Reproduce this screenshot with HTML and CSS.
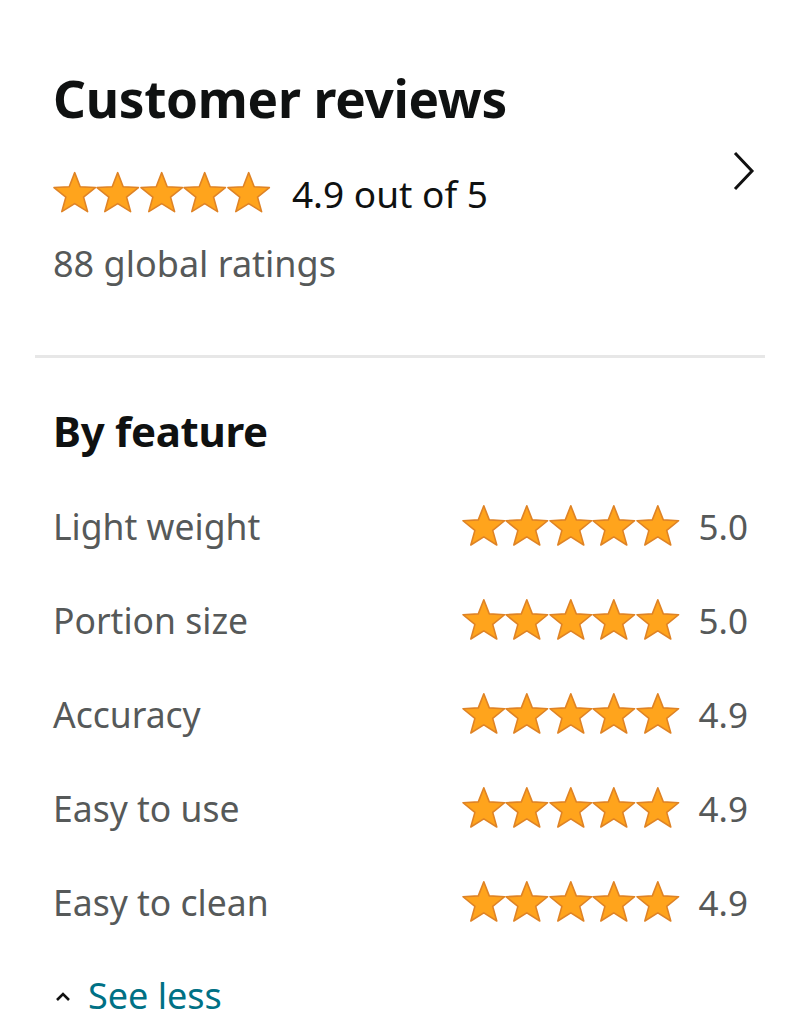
FILE: index.html
```html
<!DOCTYPE html>
<html lang="en">
<head>
<meta charset="utf-8">
<link rel="stylesheet" href="styles.css">
</head>
<body>
<svg width="0" height="0" class="defs" aria-hidden="true">
  <defs>
    <symbol id="star" viewBox="0 0 44 44" overflow="visible">
      <polygon points="22,1.6 27.55,15.85 43,16.7 30.99,26.42 35.1,41.2 22,32.95 8.9,41.2 13.01,26.42 1,16.7 16.45,15.85" fill="#FFA41C" stroke="#DF8325" stroke-width="1.6" stroke-linejoin="round"/>
    </symbol>
  </defs>
</svg>
<main class="page">
  <section class="summary">
    <h1 class="title">Customer reviews</h1>
    <div class="overall">
      <div class="overall-left">
        <span class="stars stars-lg">
          <svg><use href="#star"/></svg><svg><use href="#star"/></svg><svg><use href="#star"/></svg><svg><use href="#star"/></svg><svg><use href="#star"/></svg>
        </span>
        <span class="overall-text">4.9 out of 5</span>
      </div>
      <svg class="chevron" viewBox="0 0 22 40"><polyline points="2,2 19,20 2,38" fill="none" stroke="#111" stroke-width="3"/></svg>
    </div>
    <div class="global">88 global ratings</div>
  </section>
  <hr class="divider">
  <section class="features">
    <h2 class="subtitle">By feature</h2>
    <ul class="feature-list">
      <li class="feature"><span class="feature-name">Light weight</span><span class="feature-score"><span class="stars"><svg><use href="#star"/></svg><svg><use href="#star"/></svg><svg><use href="#star"/></svg><svg><use href="#star"/></svg><svg><use href="#star"/></svg></span><span class="num">5.0</span></span></li>
      <li class="feature"><span class="feature-name">Portion size</span><span class="feature-score"><span class="stars"><svg><use href="#star"/></svg><svg><use href="#star"/></svg><svg><use href="#star"/></svg><svg><use href="#star"/></svg><svg><use href="#star"/></svg></span><span class="num">5.0</span></span></li>
      <li class="feature"><span class="feature-name">Accuracy</span><span class="feature-score"><span class="stars"><svg><use href="#star"/></svg><svg><use href="#star"/></svg><svg><use href="#star"/></svg><svg><use href="#star"/></svg><svg><use href="#star"/></svg></span><span class="num">4.9</span></span></li>
      <li class="feature"><span class="feature-name">Easy to use</span><span class="feature-score"><span class="stars"><svg><use href="#star"/></svg><svg><use href="#star"/></svg><svg><use href="#star"/></svg><svg><use href="#star"/></svg><svg><use href="#star"/></svg></span><span class="num">4.9</span></span></li>
      <li class="feature"><span class="feature-name">Easy to clean</span><span class="feature-score"><span class="stars"><svg><use href="#star"/></svg><svg><use href="#star"/></svg><svg><use href="#star"/></svg><svg><use href="#star"/></svg><svg><use href="#star"/></svg></span><span class="num">4.9</span></span></li>
    </ul>
    <a class="see-less" href="#"><svg class="caret" viewBox="0 0 16 12"><polyline points="2,10 8,4 14,10" fill="none" stroke="#111" stroke-width="2.6"/></svg><span>See less</span></a>
  </section>
</main>
</body>
</html>
```

FILE: styles.css
```css
html, body {
  margin: 0;
  padding: 0;
  background: #fff;
}
body {
  font-family: "Noto Sans", "Open Sans", "Liberation Sans", sans-serif;
  color: #0f1111;
}
.defs {
  position: absolute;
  width: 0;
  height: 0;
}
.page {
  padding: 0 35px 0 35px;
}
.summary {
  padding: 66px 0 0 18px;
}
.title {
  margin: 0;
  font-size: 51.3px;
  font-weight: 700;
  line-height: 64px;
  letter-spacing: -0.3px;
}
.overall {
  display: flex;
  align-items: center;
  justify-content: space-between;
  margin-top: 35px;
  height: 56px;
}
.overall-left {
  display: flex;
  align-items: center;
  gap: 22px;
}
.stars {
  display: inline-flex;
}
.stars svg {
  width: 43.6px;
  height: 44px;
  display: block;
  overflow: visible;
}
.stars-lg svg {
  width: 43.4px;
  height: 43.5px;
}
.overall-text {
  font-size: 37px;
  color: #0f1111;
}
.chevron {
  width: 22px;
  height: 40px;
  margin-right: 10px;
  margin-top: -44px;
}
.global {
  margin-top: 19px;
  font-size: 36px;
  color: #565959;
  line-height: 48px;
}
.divider {
  margin: 67px 0 0 0;
  border: 0;
  height: 3px;
  background: #e7e7e7;
}
.features {
  padding: 45px 0 0 18px;
}
.subtitle {
  margin: 0;
  font-size: 42px;
  font-weight: 700;
  line-height: 56px;
  letter-spacing: -0.3px;
}
.feature-list {
  list-style: none;
  margin: 20px 0 0 0;
  padding: 0;
}
.feature {
  display: flex;
  align-items: center;
  justify-content: space-between;
  height: 94px;
  padding-right: 17px;
}
.feature-name {
  font-size: 35.5px;
  color: #565959;
}
.feature-score {
  display: flex;
  align-items: center;
  gap: 19px;
}
.num {
  font-size: 35px;
  color: #565959;
}
.see-less {
  display: inline-flex;
  align-items: center;
  gap: 17px;
  margin-top: 29px;
  text-decoration: none;
  color: #007185;
  font-size: 36px;
  line-height: 36px;
}
.caret {
  width: 16px;
  height: 12px;
  margin-left: 2px;
}
```
